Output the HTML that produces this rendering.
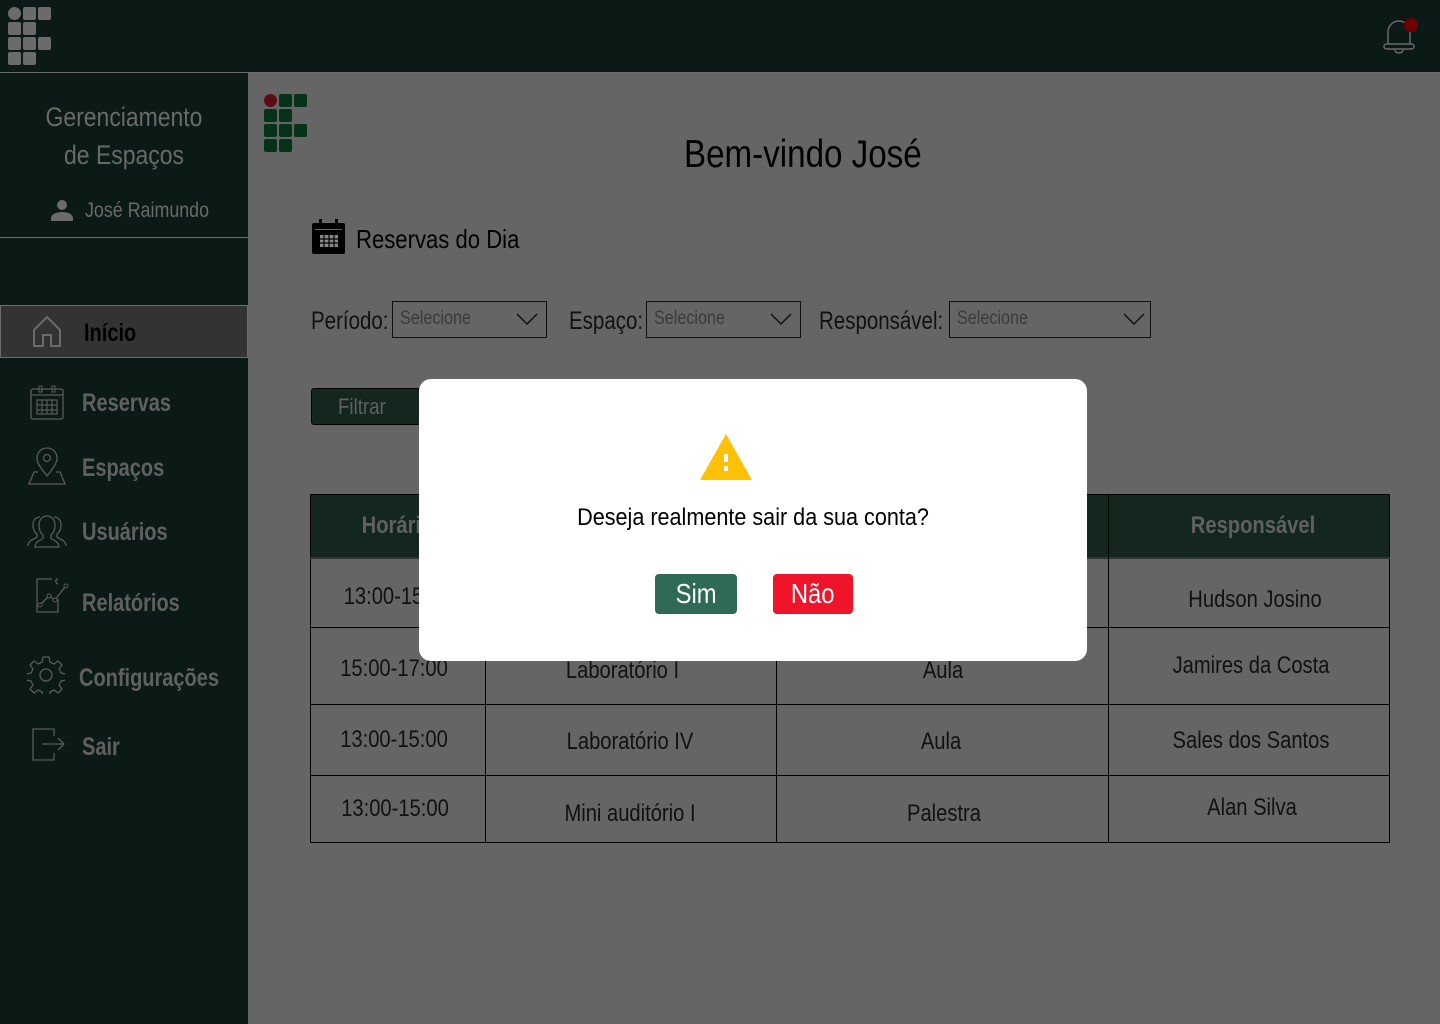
<!DOCTYPE html>
<html><head><meta charset="utf-8"><style>
*{margin:0;padding:0;box-sizing:border-box}
body{width:1440px;height:1024px;overflow:hidden;background:#656565;font-family:"Liberation Sans Narrow","Liberation Sans",sans-serif;position:relative}
.a{position:absolute}
.sq{position:absolute;width:13px;height:13px;border-radius:2px}
.t{white-space:nowrap}
.n{transform:scaleX(.85);transform-origin:left center}
.nc{transform:scaleX(.85);transform-origin:center center}
.ib{display:inline-block}
.nav{position:absolute;left:82px;color:#5f615f;font-size:25px;font-weight:bold;transform:scaleX(.8);transform-origin:left center}
.lbl{position:absolute;font-size:25px;color:#111;transform:scaleX(.82);transform-origin:left center}
.sel{position:absolute;height:37px;border:1px solid #111;font-size:19px;color:#3a3a3a;padding:6px 7px}
.cell{position:absolute;font-size:24px;color:#111;text-align:center;transform:scaleX(.84);transform-origin:center center}
</style></head><body>
<!-- header -->
<div class="a" style="left:0;top:0;width:1440px;height:72px;background:#0c1a17"></div>
<div class="a" style="left:0;top:72px;width:1440px;height:1px;background:#6c6c6c"></div>
<div class="sq" style="left:8px;top:7px;border-radius:50%;background:#6b6b6b"></div>
<div class="sq" style="left:23px;top:7px;background:#6b6b6b"></div>
<div class="sq" style="left:38px;top:7px;background:#6b6b6b"></div>
<div class="sq" style="left:8px;top:22px;background:#6b6b6b"></div>
<div class="sq" style="left:23px;top:22px;background:#6b6b6b"></div>
<div class="sq" style="left:8px;top:37px;background:#6b6b6b"></div>
<div class="sq" style="left:23px;top:37px;background:#6b6b6b"></div>
<div class="sq" style="left:38px;top:37px;background:#6b6b6b"></div>
<div class="sq" style="left:8px;top:52px;background:#6b6b6b"></div>
<div class="sq" style="left:23px;top:52px;background:#6b6b6b"></div>
<svg class="a" style="left:1380px;top:16px" width="40" height="40" viewBox="0 0 40 40"><path d="M8 28 V16 a11 11 0 0 1 22 0 V28" fill="none" stroke="#6a6a6a" stroke-width="1.5"/><rect x="4" y="28" width="30" height="5" rx="2.5" fill="none" stroke="#6a6a6a" stroke-width="1.5"/><path d="M15 34 a4 3 0 0 0 8 0" fill="none" stroke="#6a6a6a" stroke-width="1.5"/><circle cx="31" cy="9" r="7" fill="#6e0000"/></svg>
<!-- sidebar -->
<div class="a" style="left:0;top:73px;width:248px;height:951px;background:#0c1a17"></div>
<div class="a t nc" style="left:0;top:98px;width:248px;text-align:center;color:#686a68;font-size:27px;line-height:38px;white-space:normal">Gerenciamento<br>de Espaços</div>
<svg class="a" style="left:50px;top:198px" width="24" height="24" viewBox="0 0 24 24"><circle cx="12" cy="7" r="5" fill="#6b6b6b"/><path d="M1 23 v-3 c0-4 6-6 11-6 s11 2 11 6 v3z" fill="#6b6b6b"/></svg>
<div class="a t n" style="left:85px;top:199px;color:#686a68;font-size:21px">José Raimundo</div>
<div class="a" style="left:0;top:237px;width:248px;height:1px;background:#6c6c6c"></div>
<div class="a" style="left:0;top:305px;width:248px;height:53px;background:#333;border:1px solid #6c6c6c"></div>
<svg class="a" style="left:31px;top:314px" width="32" height="34" viewBox="0 0 32 34"><path d="M3 32 V16 L16 3 L29 16 V32 H20 V21 H12 V32 Z" fill="none" stroke="#6b6b6b" stroke-width="2" stroke-linejoin="round"/></svg>
<div class="nav t" style="left:84px;top:319px;color:#000">Início</div>
<svg class="a" style="left:30px;top:385px" width="34" height="36" viewBox="0 0 34 36"><rect x="1" y="4" width="32" height="30" rx="2" fill="none" stroke="#5a5a5a" stroke-width="1.3"/><line x1="1" y1="10" x2="33" y2="10" stroke="#5a5a5a" stroke-width="1.3"/><rect x="9" y="1" width="3" height="6" fill="none" stroke="#5a5a5a"/><rect x="22" y="1" width="3" height="6" fill="none" stroke="#5a5a5a"/><path d="M7 15h20v14H7zM7 20h20M7 25h20M12 15v14M17 15v14M22 15v14" fill="none" stroke="#5a5a5a" stroke-width="1.2"/></svg>
<div class="nav t" style="top:389px">Reservas</div>
<svg class="a" style="left:28px;top:446px" width="38" height="40" viewBox="0 0 38 40"><path d="M19 30 C12 21 9 17 9 12 a10 10 0 0 1 20 0 c0 5 -3 9 -10 18z" fill="none" stroke="#5a5a5a" stroke-width="1.3"/><circle cx="19" cy="12" r="3.5" fill="none" stroke="#5a5a5a" stroke-width="1.3"/><path d="M10 26 H6 L1 38 H37 L32 26 H28" fill="none" stroke="#5a5a5a" stroke-width="1.3"/></svg>
<div class="nav t" style="top:454px">Espaços</div>
<svg class="a" style="left:27px;top:514px" width="40" height="34" viewBox="0 0 40 34"><path d="M1 32 c0-6 7-7 9-9 v-3 c-3-2-4-5-4-9 0-5 3-8 7-8 M39 32 c0-6-7-7-9-9 v-3 c3-2 4-5 4-9 0-5-3-8-7-8 M8 33 c0-6 7-7 8-9 v-3 c-3-2-4-5-4-10 0-5 3-9 8-9 s8 4 8 9 c0 5-1 8-4 10 v3 c1 2 8 3 8 9 z" fill="none" stroke="#5a5a5a" stroke-width="1.3"/></svg>
<div class="nav t" style="top:518px">Usuários</div>
<svg class="a" style="left:34px;top:577px" width="38" height="38" viewBox="0 0 38 38"><path d="M18 2 H3 V35 H24 V22 M24 2 c-3 0-3 4 0 5" fill="none" stroke="#5a5a5a" stroke-width="1.3"/><path d="M6 28 L15 19 L21 23 L31 10" fill="none" stroke="#5a5a5a" stroke-width="1.3"/><circle cx="6" cy="28" r="2" fill="#0c1a17" stroke="#5a5a5a"/><circle cx="15" cy="19" r="2" fill="#0c1a17" stroke="#5a5a5a"/><circle cx="21" cy="23" r="2" fill="#0c1a17" stroke="#5a5a5a"/><circle cx="32" cy="9" r="2" fill="#0c1a17" stroke="#5a5a5a"/></svg>
<div class="nav t" style="top:589px">Relatórios</div>
<svg class="a" style="left:27px;top:656px" width="38" height="38" viewBox="0 0 38 38"><path d="M16 1 h6 l1 5 l4 2 l4-3 l4 4 l-3 4 l2 4 l5 1 v6 l-5 1 l-2 4 l3 4 l-4 4 l-4-3 l-4 2 l-1 5 h-6 l-1-5 l-4-2 l-4 3 l-4-4 l3-4 l-2-4 l-5-1 v-6 l5-1 l2-4 l-3-4 l4-4 l4 3 l4-2 z" fill="none" stroke="#5a5a5a" stroke-width="1.3" stroke-linejoin="round"/><circle cx="19" cy="19" r="6" fill="none" stroke="#5a5a5a" stroke-width="1.3"/></svg>
<div class="nav t" style="left:79px;top:664px">Configurações</div>
<svg class="a" style="left:32px;top:728px" width="36" height="34" viewBox="0 0 36 34"><path d="M22 8 V1 H1 V32 H22 V25" fill="none" stroke="#5a5a5a" stroke-width="1.3"/><path d="M10 16 H32 M26 10 L32 16 L26 22" fill="none" stroke="#5a5a5a" stroke-width="1.3"/></svg>
<div class="nav t" style="top:733px">Sair</div>
<!-- content logo -->
<div class="sq" style="left:264px;top:94px;border-radius:50%;background:#5c0b12"></div>
<div class="sq" style="left:279px;top:94px;background:#063217"></div>
<div class="sq" style="left:294px;top:94px;background:#063217"></div>
<div class="sq" style="left:264px;top:109px;background:#063217"></div>
<div class="sq" style="left:279px;top:109px;background:#063217"></div>
<div class="sq" style="left:264px;top:124px;background:#063217"></div>
<div class="sq" style="left:279px;top:124px;background:#063217"></div>
<div class="sq" style="left:294px;top:124px;background:#063217"></div>
<div class="sq" style="left:264px;top:139px;background:#063217"></div>
<div class="sq" style="left:279px;top:139px;background:#063217"></div>
<div class="a t n" style="left:684px;top:133px;font-size:39px;color:#000">Bem-vindo José</div>
<svg class="a" style="left:312px;top:219px" width="34" height="36" viewBox="0 0 34 36"><rect x="0" y="4" width="33" height="31" rx="2" fill="#000"/><rect x="7" y="0" width="3" height="7" fill="#000"/><rect x="23" y="0" width="3" height="7" fill="#000"/><rect x="3" y="10" width="27" height="1" fill="#666"/><path d="M8 16h18v12H8z" fill="#888"/><path d="M8 20h18M8 24h18M12 16v12M17 16v12M22 16v12" stroke="#000" stroke-width="1.2"/></svg>
<div class="a t n" style="left:356px;top:224px;font-size:26px;color:#000">Reservas do Dia</div>
<div class="lbl t" style="left:311px;top:307px">Período:</div>
<div class="sel t" style="left:392px;top:301px;width:155px"><span class="ib n">Selecione</span></div>
<div class="lbl t" style="left:569px;top:307px">Espaço:</div>
<div class="sel t" style="left:646px;top:301px;width:155px"><span class="ib n">Selecione</span></div>
<div class="lbl t" style="left:819px;top:307px">Responsável:</div>
<div class="sel t" style="left:949px;top:301px;width:202px"><span class="ib n">Selecione</span></div>
<svg class="a" style="left:515px;top:311px" width="24" height="16"><path d="M2 3 L12 13 L22 3" fill="none" stroke="#111" stroke-width="1.5"/></svg>
<svg class="a" style="left:769px;top:311px" width="24" height="16"><path d="M2 3 L12 13 L22 3" fill="none" stroke="#111" stroke-width="1.5"/></svg>
<svg class="a" style="left:1122px;top:311px" width="24" height="16"><path d="M2 3 L12 13 L22 3" fill="none" stroke="#111" stroke-width="1.5"/></svg>
<div class="a t" style="left:311px;top:388px;width:110px;height:37px;background:#13271f;border:1px solid #000;border-radius:3px;color:#5f615f;font-size:22px;padding:5px 0 0 26px"><span class="ib n">Filtrar</span></div>
<!-- table -->
<div class="a" style="left:310px;top:494px;width:1080px;height:349px;border:1px solid #000"></div>
<div class="a" style="left:311px;top:495px;width:1078px;height:62px;background:#13271f"></div>
<div class="a" style="left:310px;top:557px;width:1080px;height:2px;background:#333"></div>
<div class="a" style="left:310px;top:627px;width:1080px;height:1px;background:#000"></div>
<div class="a" style="left:310px;top:704px;width:1080px;height:1px;background:#000"></div>
<div class="a" style="left:310px;top:775px;width:1080px;height:1px;background:#000"></div>
<div class="a" style="left:485px;top:557px;width:1px;height:286px;background:#000"></div>
<div class="a" style="left:776px;top:557px;width:1px;height:286px;background:#000"></div>
<div class="a" style="left:1108px;top:494px;width:1px;height:349px;background:#000"></div>
<div class="cell t" style="left:310px;top:512px;width:175px;font-weight:bold;color:#5f615f">Horário</div>
<div class="cell t" style="left:1108px;top:512px;width:290px;font-weight:bold;color:#5f615f">Responsável</div>
<div class="cell t" style="left:310px;top:583px;width:175px">13:00-15:00</div>
<div class="cell t" style="left:1108px;top:586px;width:294px">Hudson Josino</div>
<div class="cell t" style="left:310px;top:655px;width:168px">15:00-17:00</div>
<div class="cell t" style="left:485px;top:657px;width:275px">Laboratório I</div>
<div class="cell t" style="left:776px;top:657px;width:334px">Aula</div>
<div class="cell t" style="left:1108px;top:652px;width:286px">Jamires da Costa</div>
<div class="cell t" style="left:310px;top:726px;width:168px">13:00-15:00</div>
<div class="cell t" style="left:485px;top:728px;width:290px">Laboratório IV</div>
<div class="cell t" style="left:776px;top:728px;width:330px">Aula</div>
<div class="cell t" style="left:1108px;top:727px;width:286px">Sales dos Santos</div>
<div class="cell t" style="left:310px;top:795px;width:170px">13:00-15:00</div>
<div class="cell t" style="left:485px;top:800px;width:290px">Mini auditório I</div>
<div class="cell t" style="left:776px;top:800px;width:336px">Palestra</div>
<div class="cell t" style="left:1108px;top:794px;width:288px">Alan Silva</div>
<!-- modal -->
<div class="a" style="left:419px;top:379px;width:668px;height:282px;background:#fff;border-radius:12px"></div>
<svg class="a" style="left:699px;top:433px" width="54" height="48" viewBox="0 0 54 48"><path d="M27 1 L53 47 H1 Z" fill="#ffc107"/><rect x="25" y="21" width="4" height="8" fill="#fff"/><rect x="25" y="33" width="4" height="5" fill="#fff"/></svg>
<div class="a t" style="left:419px;top:504px;width:668px;text-align:center;font-size:24px;color:#000;transform:scaleX(.9);transform-origin:center">Deseja realmente sair da sua conta?</div>
<div class="a t" style="left:655px;top:574px;width:82px;height:40px;background:#2f6a56;border-radius:4px;color:#fff;font-size:28px;text-align:center;line-height:40px"><span class="ib nc">Sim</span></div>
<div class="a t" style="left:773px;top:574px;width:80px;height:40px;background:#f0142b;border-radius:4px;color:#fff;font-size:28px;text-align:center;line-height:40px"><span class="ib nc">Não</span></div>
</body></html>
